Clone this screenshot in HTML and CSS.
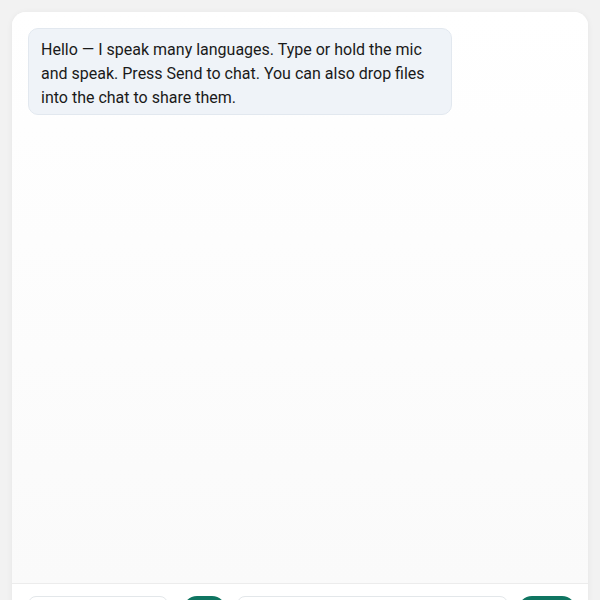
FILE: index.html
```html
<!DOCTYPE html>
<html lang="en">
<head>
<meta charset="utf-8">
<title>Chat</title>
<link rel="stylesheet" href="styles.css">
</head>
<body>
<div class="card">
  <div class="messages">
    <div class="bubble">Hello — I speak many languages. Type or hold the mic and speak. Press Send to chat. You can also drop files into the chat to share them.</div>
  </div>
  <div class="composer">
    <input class="lang" type="text" aria-label="Language">
    <button class="btn mic" type="button" aria-label="Mic"></button>
    <input class="text" type="text" aria-label="Message">
    <button class="btn send" type="button" aria-label="Send"></button>
  </div>
</div>
</body>
</html>
```
FILE: styles.css
```css
html, body {
  margin: 0;
  background: #f2f2f2;
  font-family: Roboto, "Noto Sans", sans-serif;
}
body {
  padding: 12px;
  height: 600px;
  overflow: hidden;
  box-sizing: border-box;
}
.card {
  width: 576px;
  background: #ffffff;
  border-radius: 14px;
  box-shadow: 0 1px 6px rgba(0,0,0,0.06);
  overflow: hidden;
}
.messages {
  height: 572px;
  box-sizing: border-box;
  padding: 16px;
  background: linear-gradient(#ffffff, #fafafa);
  border-bottom: 1px solid #ececec;
}
.bubble {
  width: 424px;
  box-sizing: border-box;
  padding: 9px 12px 4px 12px;
  background: #eff3f8;
  border: 1px solid #e2e8ef;
  border-radius: 10px;
  color: #1a1a1a;
  font-size: 16px;
  line-height: 24px;
}
.composer {
  display: flex;
  align-items: flex-start;
  padding: 12px 12px 12px 16px;
  background: #ffffff;
}
.lang {
  width: 140px;
  height: 36px;
  box-sizing: border-box;
  border: 1px solid #e3e7ea;
  border-radius: 8px;
  margin: 0 15px 0 0;
  padding: 0;
}
.text {
  flex: 1;
  height: 36px;
  box-sizing: border-box;
  border: 1px solid #e3e7ea;
  border-radius: 8px;
  margin: 0 10px 0 11px;
  padding: 0;
}
.btn {
  height: 36px;
  border: none;
  border-radius: 14px;
  background: #0f7561;
  padding: 0;
}
.mic { width: 43px; }
.send { width: 58px; }
```
